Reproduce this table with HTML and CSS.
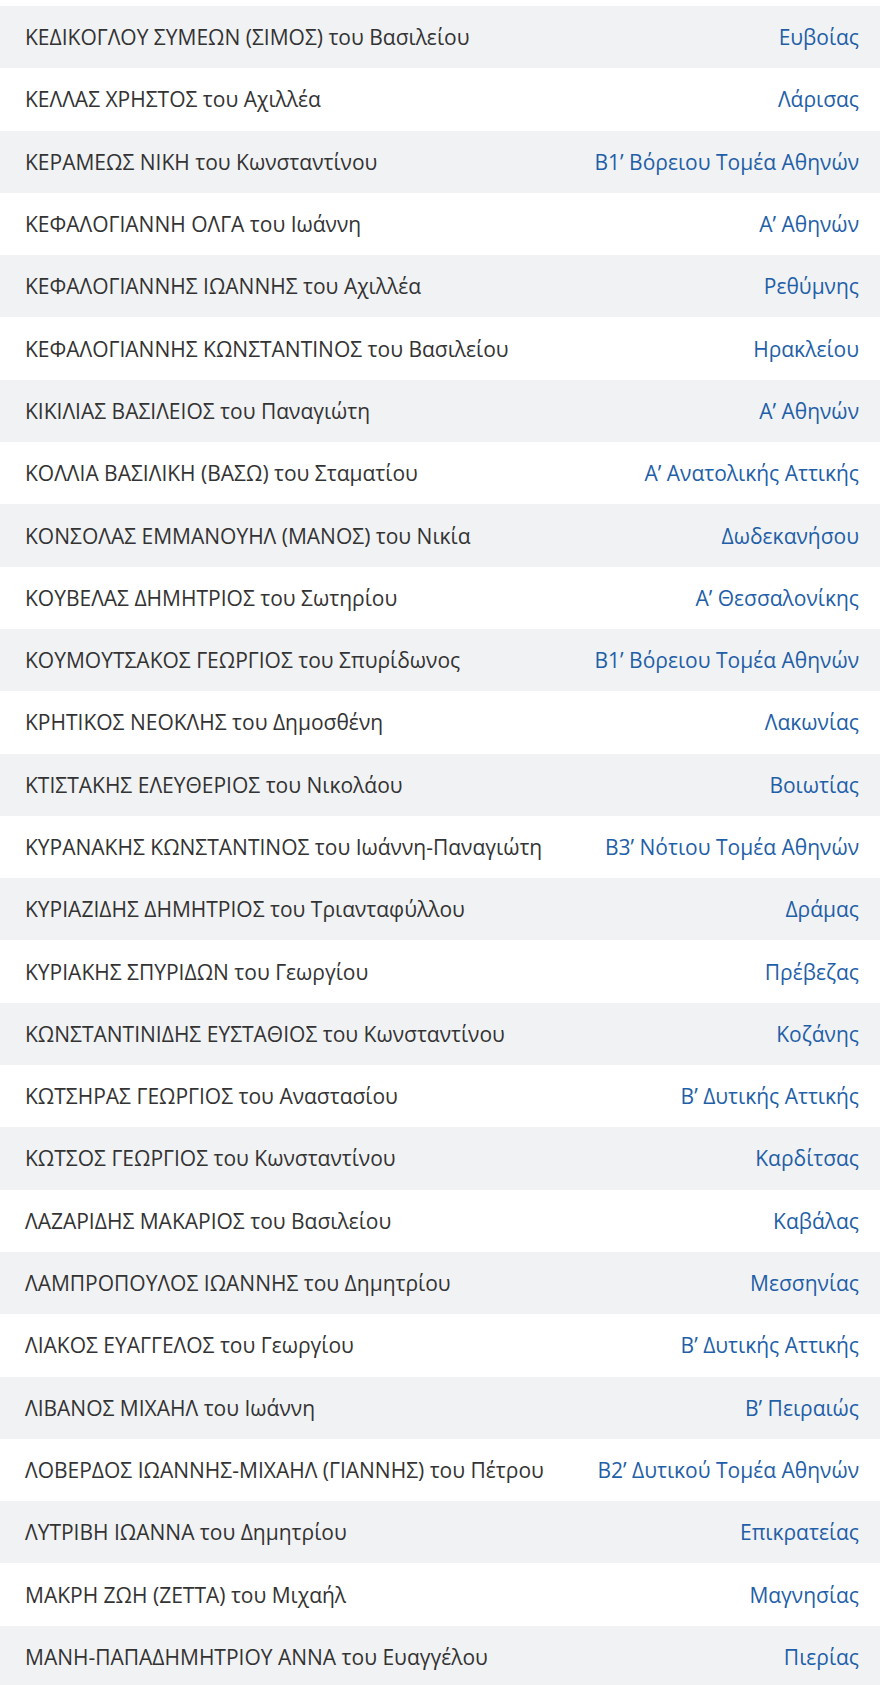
FILE: index.html
```html
<!DOCTYPE html>
<html lang="el">
<head>
<meta charset="utf-8">
<link rel="stylesheet" href="styles.css">
</head>
<body>
<ul class="list">
<li class="row"><span class="name">ΚΕΔΙΚΟΓΛΟΥ ΣΥΜΕΩΝ (ΣΙΜΟΣ) του Βασιλείου</span><span class="area">Ευβοίας</span></li>
<li class="row"><span class="name">ΚΕΛΛΑΣ ΧΡΗΣΤΟΣ του Αχιλλέα</span><span class="area">Λάρισας</span></li>
<li class="row"><span class="name">ΚΕΡΑΜΕΩΣ ΝΙΚΗ του Κωνσταντίνου</span><span class="area">Β1’ Βόρειου Τομέα Αθηνών</span></li>
<li class="row"><span class="name">ΚΕΦΑΛΟΓΙΑΝΝΗ ΟΛΓΑ του Ιωάννη</span><span class="area">Α’ Αθηνών</span></li>
<li class="row"><span class="name">ΚΕΦΑΛΟΓΙΑΝΝΗΣ ΙΩΑΝΝΗΣ του Αχιλλέα</span><span class="area">Ρεθύμνης</span></li>
<li class="row"><span class="name">ΚΕΦΑΛΟΓΙΑΝΝΗΣ ΚΩΝΣΤΑΝΤΙΝΟΣ του Βασιλείου</span><span class="area">Ηρακλείου</span></li>
<li class="row"><span class="name">ΚΙΚΙΛΙΑΣ ΒΑΣΙΛΕΙΟΣ του Παναγιώτη</span><span class="area">Α’ Αθηνών</span></li>
<li class="row"><span class="name">ΚΟΛΛΙΑ ΒΑΣΙΛΙΚΗ (ΒΑΣΩ) του Σταματίου</span><span class="area">Α’ Ανατολικής Αττικής</span></li>
<li class="row"><span class="name">ΚΟΝΣΟΛΑΣ ΕΜΜΑΝΟΥΗΛ (ΜΑΝΟΣ) του Νικία</span><span class="area">Δωδεκανήσου</span></li>
<li class="row"><span class="name">ΚΟΥΒΕΛΑΣ ΔΗΜΗΤΡΙΟΣ του Σωτηρίου</span><span class="area">Α’ Θεσσαλονίκης</span></li>
<li class="row"><span class="name">ΚΟΥΜΟΥΤΣΑΚΟΣ ΓΕΩΡΓΙΟΣ του Σπυρίδωνος</span><span class="area">Β1’ Βόρειου Τομέα Αθηνών</span></li>
<li class="row"><span class="name">ΚΡΗΤΙΚΟΣ ΝΕΟΚΛΗΣ του Δημοσθένη</span><span class="area">Λακωνίας</span></li>
<li class="row"><span class="name">ΚΤΙΣΤΑΚΗΣ ΕΛΕΥΘΕΡΙΟΣ του Νικολάου</span><span class="area">Βοιωτίας</span></li>
<li class="row"><span class="name">ΚΥΡΑΝΑΚΗΣ ΚΩΝΣΤΑΝΤΙΝΟΣ του Ιωάννη-Παναγιώτη</span><span class="area">Β3’ Νότιου Τομέα Αθηνών</span></li>
<li class="row"><span class="name">ΚΥΡΙΑΖΙΔΗΣ ΔΗΜΗΤΡΙΟΣ του Τριανταφύλλου</span><span class="area">Δράμας</span></li>
<li class="row"><span class="name">ΚΥΡΙΑΚΗΣ ΣΠΥΡΙΔΩΝ του Γεωργίου</span><span class="area">Πρέβεζας</span></li>
<li class="row"><span class="name">ΚΩΝΣΤΑΝΤΙΝΙΔΗΣ ΕΥΣΤΑΘΙΟΣ του Κωνσταντίνου</span><span class="area">Κοζάνης</span></li>
<li class="row"><span class="name">ΚΩΤΣΗΡΑΣ ΓΕΩΡΓΙΟΣ του Αναστασίου</span><span class="area">Β’ Δυτικής Αττικής</span></li>
<li class="row"><span class="name">ΚΩΤΣΟΣ ΓΕΩΡΓΙΟΣ του Κωνσταντίνου</span><span class="area">Καρδίτσας</span></li>
<li class="row"><span class="name">ΛΑΖΑΡΙΔΗΣ ΜΑΚΑΡΙΟΣ του Βασιλείου</span><span class="area">Καβάλας</span></li>
<li class="row"><span class="name">ΛΑΜΠΡΟΠΟΥΛΟΣ ΙΩΑΝΝΗΣ του Δημητρίου</span><span class="area">Μεσσηνίας</span></li>
<li class="row"><span class="name">ΛΙΑΚΟΣ ΕΥΑΓΓΕΛΟΣ του Γεωργίου</span><span class="area">Β’ Δυτικής Αττικής</span></li>
<li class="row"><span class="name">ΛΙΒΑΝΟΣ ΜΙΧΑΗΛ του Ιωάννη</span><span class="area">Β’ Πειραιώς</span></li>
<li class="row"><span class="name">ΛΟΒΕΡΔΟΣ ΙΩΑΝΝΗΣ-ΜΙΧΑΗΛ (ΓΙΑΝΝΗΣ) του Πέτρου</span><span class="area">Β2’ Δυτικού Τομέα Αθηνών</span></li>
<li class="row"><span class="name">ΛΥΤΡΙΒΗ ΙΩΑΝΝΑ του Δημητρίου</span><span class="area">Επικρατείας</span></li>
<li class="row"><span class="name">ΜΑΚΡΗ ΖΩΗ (ΖΕΤΤΑ) του Μιχαήλ</span><span class="area">Μαγνησίας</span></li>
<li class="row"><span class="name">ΜΑΝΗ-ΠΑΠΑΔΗΜΗΤΡΙΟΥ ΑΝΝΑ του Ευαγγέλου</span><span class="area">Πιερίας</span></li>
</ul>
</body>
</html>
```

FILE: styles.css
```css
html, body {
  margin: 0;
  padding: 0;
  background: #ffffff;
}
body {
  font-family: "Open Sans", "Noto Sans", sans-serif;
  font-size: 21px;
  color: #333333;
  padding-top: 6px;
}
.list {
  list-style: none;
  margin: 0;
  padding: 0;
}
.row {
  display: flex;
  justify-content: space-between;
  align-items: center;
  height: 62.3px;
  padding: 0 21px 0 25px;
  box-sizing: border-box;
}
.row:nth-child(odd) {
  background: #f1f2f4;
}
.name {
  white-space: nowrap;
}
.area {
  color: #1f5fa8;
  white-space: nowrap;
}
```
